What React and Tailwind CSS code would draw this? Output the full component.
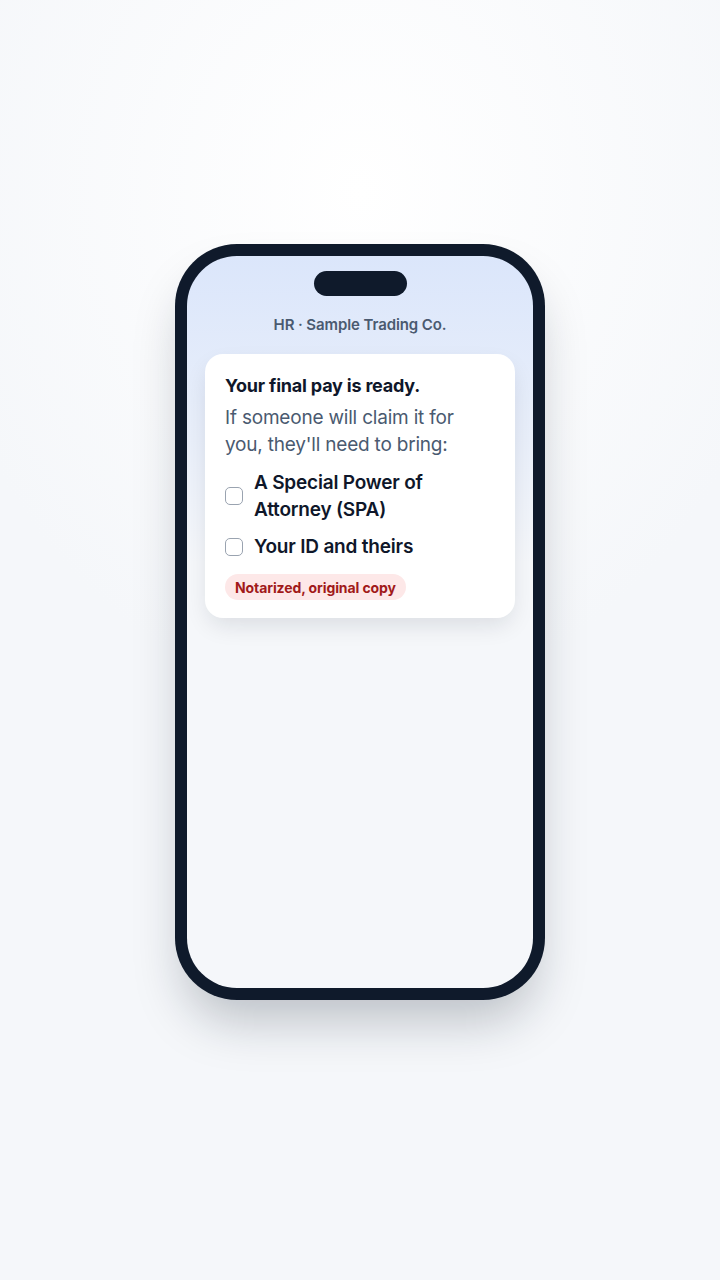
import React from 'react';

const items = ['A Special Power of Attorney (SPA)', 'Your ID and theirs'];

const Checkbox = () => (
    <span className="w-[18px] h-[18px] flex-shrink-0 rounded-[5px] border-[1.5px] border-[#9aa3b0] bg-white" />
);

export default function App() {
    return (
        <div
            className="w-full min-h-[1280px] flex justify-center pt-[244px] bg-[radial-gradient(ellipse_60%_40%_at_50%_15%,#ffffff_0%,#f5f7fa_100%)]"
            style={{ fontFamily: 'Inter, "Noto Sans", sans-serif' }}
        >
            <div className="w-[370px] h-[756px] rounded-[62px] bg-[#0f1a2b] p-[12px] shadow-[0_30px_50px_-10px_rgba(15,26,43,0.25)]">
                <div className="w-full h-full rounded-[50px] overflow-hidden bg-[linear-gradient(to_bottom,#dbe6fb_0%,#e9effa_25%,#f5f7fa_42%,#f5f7fa_100%)] flex flex-col items-center">
                    <div className="mt-[15px] w-[93px] h-[25px] rounded-full bg-[#0f1a2b]" />
                    <p className="mt-[19px] text-[15px] font-semibold text-[#4a5a70] leading-[20px] tracking-[-0.1px]">
                        HR · Sample Trading Co.
                    </p>
                    <div className="mt-[19px] w-[310px] rounded-[18px] bg-white px-[20px] pt-[20px] pb-[18px] shadow-[0_10px_24px_-4px_rgba(15,26,43,0.12)]">
                        <h1 className="text-[18px] font-bold text-[#0f172a] leading-[24px] tracking-[-0.2px]">
                            Your final pay is ready.
                        </h1>
                        <p className="mt-[6px] text-[19px] text-[#4a5a70] leading-[27px] tracking-[-0.2px]">
                            If someone will claim it for you, they'll need to bring:
                        </p>
                        <ul className="mt-[11px] flex flex-col gap-[10px]">
                            {items.map((item) => (
                                <li key={item} className="flex items-center gap-[11px]">
                                    <Checkbox />
                                    <span className="pr-[40px] text-[19px] font-semibold text-[#0f172a] leading-[27px] tracking-[-0.2px]">
                                        {item}
                                    </span>
                                </li>
                            ))}
                        </ul>
                        <span className="mt-[14px] inline-flex items-center h-[26px] px-[10px] rounded-full bg-[#fde8e8] text-[14px] font-bold text-[#a11a1a] tracking-[-0.1px]">
                            Notarized, original copy
                        </span>
                    </div>
                </div>
            </div>
        </div>
    );
}
